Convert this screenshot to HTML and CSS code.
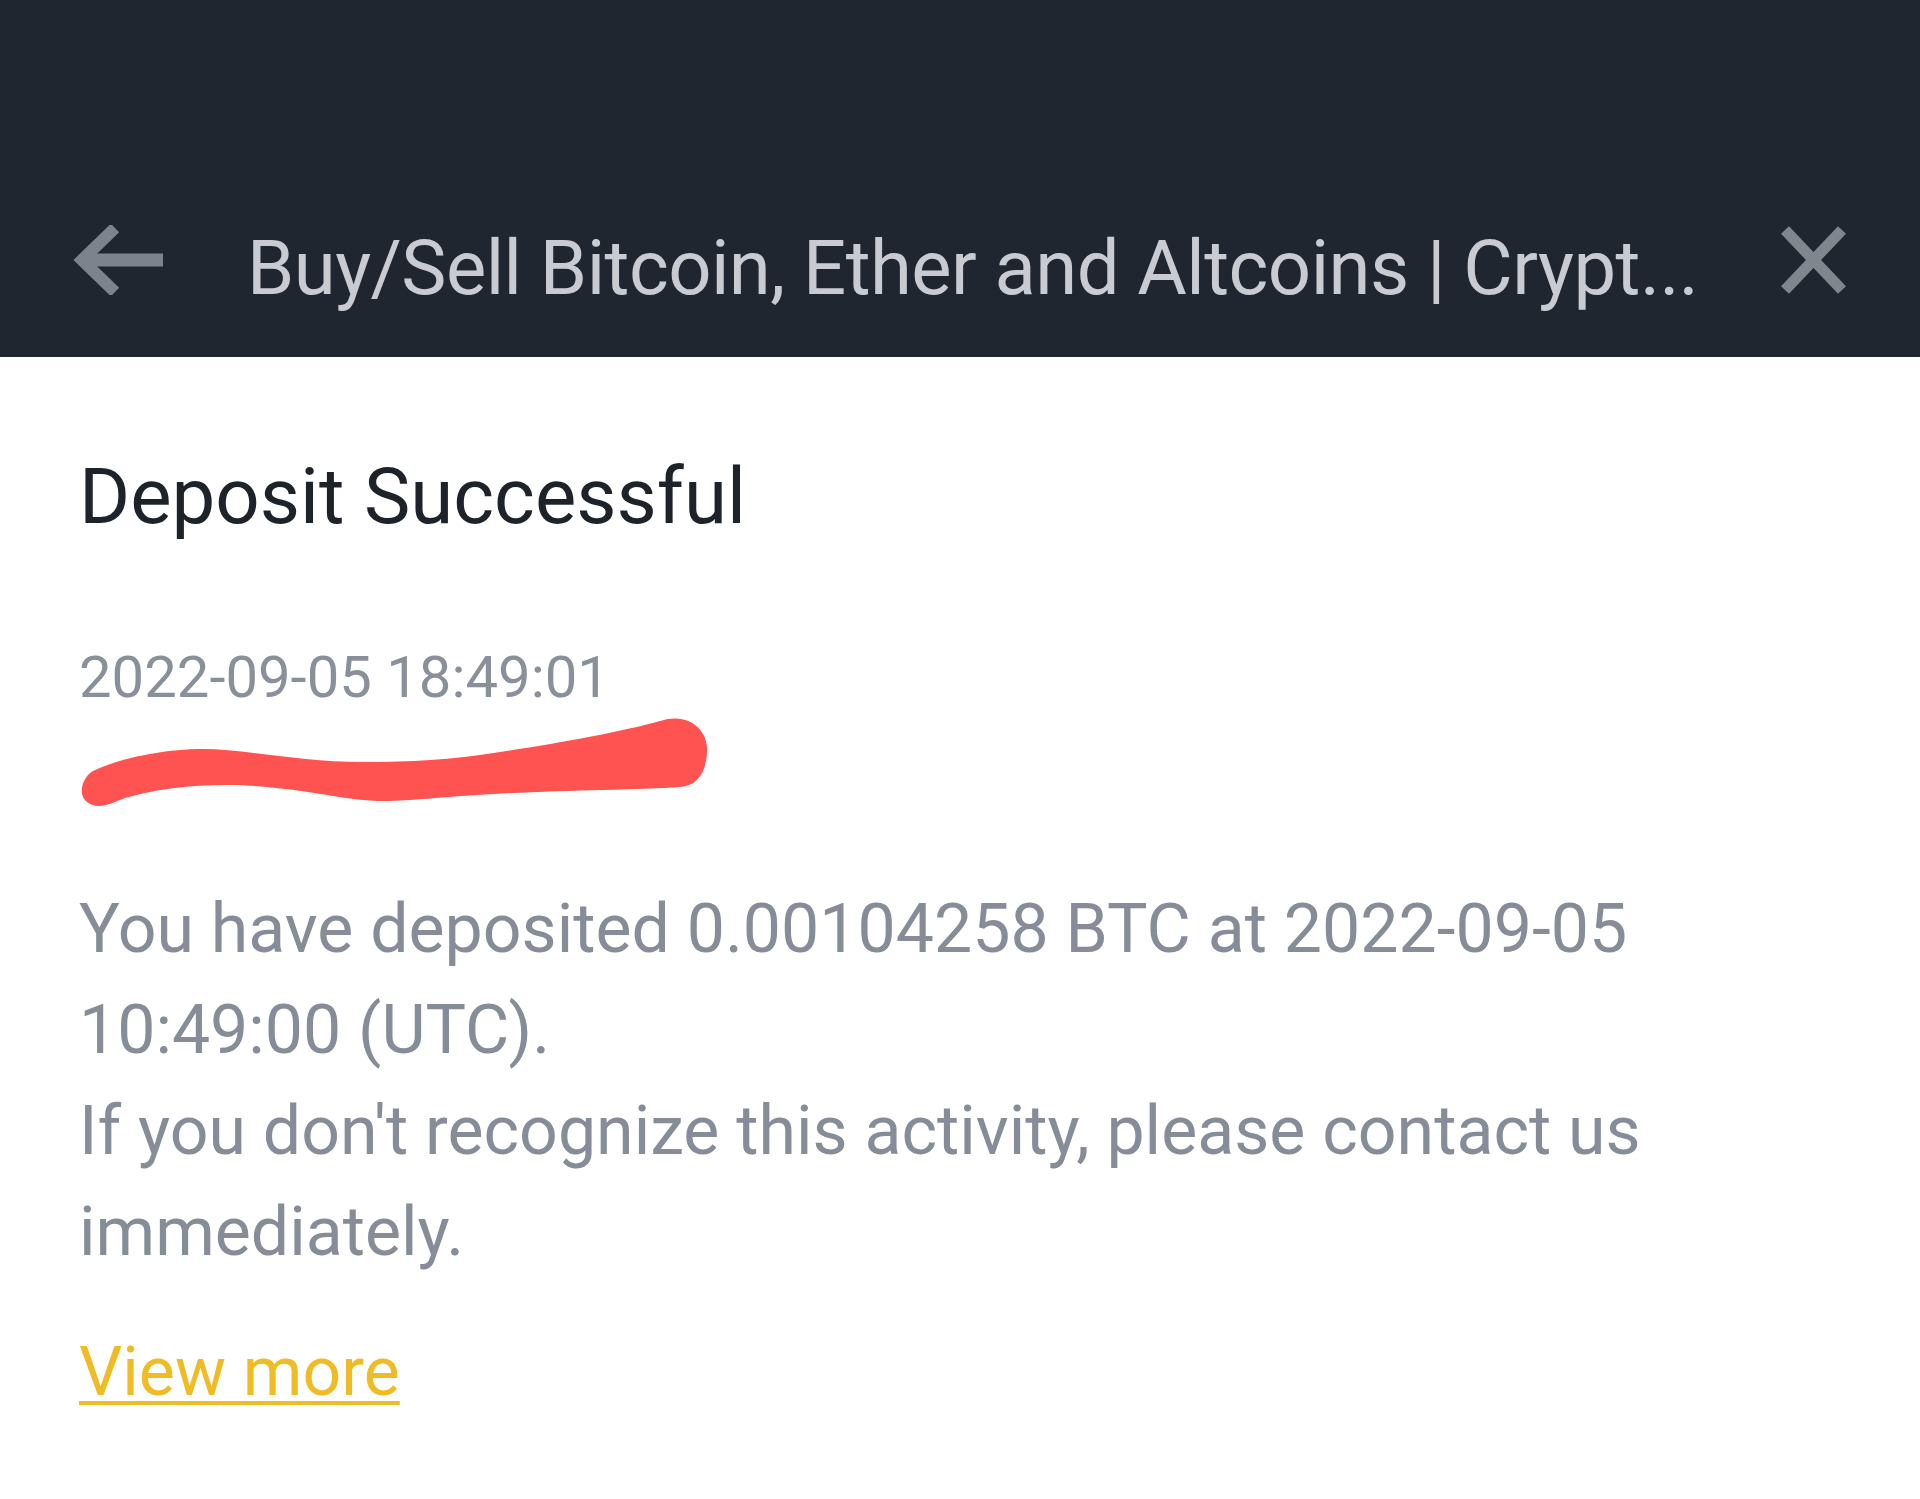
FILE: index.html
```html
<!DOCTYPE html>
<html lang="en">
<head>
<meta charset="utf-8">
<title>Deposit Successful</title>
<link rel="stylesheet" href="styles.css">
</head>
<body>
<header class="topbar">
  <div class="topbar-row">
    <svg class="icon-back" width="90" height="70" viewBox="0 0 90 70" aria-hidden="true">
      <path d="M8 35 H90" fill="none" stroke="#7c838c" stroke-width="13"/>
      <path d="M42 3 L9 35 L42 67" fill="none" stroke="#7c838c" stroke-width="12" stroke-linejoin="miter"/>
    </svg>
    <div class="topbar-title">Buy/Sell Bitcoin, Ether and Altcoins | Crypt...</div>
    <svg class="icon-close" width="67" height="70" viewBox="0 0 67 70" aria-hidden="true">
      <path d="M5 5 L62 65 M62 5 L5 65" fill="none" stroke="#80868e" stroke-width="11"/>
    </svg>
  </div>
</header>
<main class="content">
  <h1 class="heading">Deposit Successful</h1>
  <div class="date">2022-09-05 18:49:01</div>
  <svg class="scribble" width="640" height="93" viewBox="79 717 640 93" aria-hidden="true">
    <path d="M99,806 C88,806 80,798 82,788 C83,780 88,774 93,771 C115,760 160,749 203,749 C245,749 300,762 364,762 C410,762 450,760 500,752 C560,743 620,732 660,721 C690,711 709,732 707,752 C706,773 697,786 680,787 C640,790 560,790 494,794 C440,797 410,801 385,801 C340,801 300,786 230,785 C180,785 150,791 125,798 C113,803 105,806 99,806 Z" fill="#fe5351"/>
  </svg>
  <p class="message">You have deposited 0.00104258 BTC at 2022-09-05 10:49:00 (UTC).<br>If you don't recognize this activity, please contact us immediately.</p>
  <a class="view-more" href="#">View more</a>
</main>
</body>
</html>
```
FILE: styles.css
```css
html, body {
  margin: 0;
  padding: 0;
  background: #ffffff;
}
body {
  font-family: Roboto, "Liberation Sans", Arial, sans-serif;
  width: 1920px;
  min-height: 1499px;
}
.topbar {
  background: #1f2630;
  height: 357px;
  box-sizing: border-box;
  padding-top: 210px;
}
.topbar-row {
  display: flex;
  align-items: center;
  height: 100px;
  padding: 0 73px;
}
.icon-back {
  flex: none;
  display: block;
}
.topbar-title {
  flex: 1;
  margin-left: 84px;
  padding-top: 16px;
  font-size: 76px;
  line-height: 100px;
  letter-spacing: -0.55px;
  color: #c8ccd2;
  white-space: nowrap;
  overflow: hidden;
}
.icon-close {
  flex: none;
  display: block;
}
.content {
  padding: 90px 79px 0 79px;
}
.heading {
  margin: 0;
  font-size: 78px;
  line-height: 100px;
  font-weight: 400;
  color: #1e2329;
}
.date {
  margin-top: 90px;
  font-size: 58px;
  line-height: 80px;
  color: #8a909a;
}
.scribble {
  display: block;
}
.message {
  margin: 69px 0 0 0;
  font-size: 68px;
  line-height: 101px;
  color: #868d99;
}
.view-more {
  display: inline-block;
  margin-top: 39px;
  font-size: 68px;
  line-height: 101px;
  color: #efbc26;
  text-decoration: underline;
  text-decoration-thickness: 4px;
  text-underline-offset: 6px;
}
```
